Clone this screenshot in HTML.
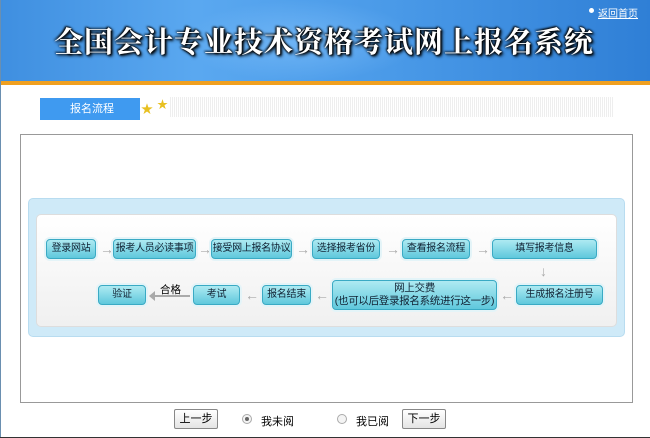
<!DOCTYPE html>
<html><head><meta charset="utf-8"><style>
*{margin:0;padding:0;box-sizing:border-box}
body{width:650px;height:438px;background:#fff;font-family:"Liberation Sans","Noto Sans CJK SC",sans-serif;font-size:11px;position:relative;overflow:hidden;color:#000}
.abs{position:absolute}
#hdr{left:0;top:0;width:650px;height:82px;background:linear-gradient(90deg,#3f8fe0 0%,#5aa8f0 30%,#4a9ae8 60%,#2f7fd6 100%);overflow:hidden}
#hdr .t{left:54px;top:20px;font-size:29px;font-weight:bold;color:#fff;letter-spacing:1px;white-space:nowrap;text-shadow:0 0 2px #000,1px 1px 2px #000,-1px -1px 2px #000,2px 2px 3px #123;font-family:"Noto Serif CJK SC","Noto Sans CJK SC",serif}
#orange{left:0;top:81px;width:650px;height:4px;background:#f0a020}
.box{position:absolute;height:20px;border-radius:4px;background:linear-gradient(#aeeaf2,#5fc8dc);border:1px solid #3aaac4;box-shadow:0 0 0 2px #e4f4f8;text-align:center;line-height:18px;font-size:10px;color:#123;white-space:nowrap;letter-spacing:-0.3px}
.ar{position:absolute;color:#aaa;font-size:14px;font-weight:bold;line-height:14px}
.btn{position:absolute;top:409px;width:44px;height:20px;border:1px solid #888;background:linear-gradient(#fff,#e4e4e4);text-align:center;line-height:18px;font-size:11px;border-radius:2px}
.rd{position:absolute;top:414px;width:10px;height:10px;border-radius:50%;border:1px solid #aaa;background:#f4f4f4}
</style></head><body>
<div id="hdr" class="abs">
<div class="abs" style="left:180px;top:0;width:240px;height:82px;background:radial-gradient(ellipse at center,rgba(140,200,255,.5),rgba(0,0,0,0) 70%)"></div>
<div class="abs t">全国会计专业技术资格考试网上报名系统</div>
<div class="abs" style="left:589px;top:8px;width:5px;height:5px;border-radius:50%;background:#fff"></div>
<div class="abs" style="left:598px;top:5px;color:#fff;font-size:10px;text-decoration:underline">返回首页</div>
</div>
<div id="orange" class="abs"></div>
<div class="abs" style="left:0;top:0;width:1px;height:438px;background:#6a8fb0"></div>
<div class="abs" style="left:40px;top:98px;width:100px;height:22px;background:#3f9af0;color:#fff;font-size:11px;line-height:22px;padding-left:30px">报名流程</div>
<div class="abs" style="left:141px;top:100px;color:#e8c020;font-size:12px">★</div>
<div class="abs" style="left:157px;top:96px;color:#e8c020;font-size:11px">★</div>
<div class="abs" style="left:170px;top:97px;width:443px;height:20px;background:repeating-linear-gradient(90deg,#eee 0 1px,#fff 1px 2px)"></div>
<div class="abs" style="left:20px;top:134px;width:613px;height:269px;border:1px solid #999"></div>
<div class="abs" style="left:28px;top:198px;width:597px;height:139px;background:#cfeaf8;border-radius:5px;border:1px solid #b8dcf0"></div>
<div class="abs" style="left:36px;top:214px;width:581px;height:113px;background:linear-gradient(#fff,#f0f0f0);border-radius:5px;border:1px solid #ddd"></div>
<div class="box" style="left:46px;top:239px;width:50px">登录网站</div>
<span class="ar" style="left:100px;top:242px">→</span>
<div class="box" style="left:113px;top:239px;width:83px">报考人员必读事项</div>
<span class="ar" style="left:198px;top:242px">→</span>
<div class="box" style="left:211px;top:239px;width:81px">接受网上报名协议</div>
<span class="ar" style="left:296px;top:242px">→</span>
<div class="box" style="left:312px;top:239px;width:68px">选择报考省份</div>
<span class="ar" style="left:386px;top:242px">→</span>
<div class="box" style="left:402px;top:239px;width:68px">查看报名流程</div>
<span class="ar" style="left:476px;top:242px">→</span>
<div class="box" style="left:492px;top:239px;width:105px">填写报考信息</div>
<span class="ar" style="left:540px;top:264px">↓</span>
<div class="box" style="left:516px;top:285px;width:87px">生成报名注册号</div>
<span class="ar" style="left:500px;top:288px">←</span>
<div class="box" style="left:332px;top:280px;width:165px;height:30px;line-height:13px;padding-top:1px;font-size:10.5px">网上交费<br>(也可以后登录报名系统进行这一步)</div>
<span class="ar" style="left:315px;top:288px">←</span>
<div class="box" style="left:262px;top:285px;width:49px">报名结束</div>
<span class="ar" style="left:245px;top:288px">←</span>
<div class="box" style="left:193px;top:285px;width:47px">考试</div>
<div class="abs" style="left:152px;top:295px;width:38px;height:2px;background:#aaa"></div>
<span class="abs" style="left:149px;top:291px;width:0;height:0;border-top:5px solid transparent;border-bottom:5px solid transparent;border-right:6px solid #aaa"></span>
<div class="abs" style="left:160px;top:282px;font-size:10.5px">合格</div>
<div class="box" style="left:98px;top:285px;width:48px">验证</div>
<div class="btn" style="left:174px">上一步</div>
<div class="rd" style="left:242px"><div style="width:4px;height:4px;border-radius:50%;background:#666;margin:2px"></div></div>
<div class="abs" style="left:261px;top:413px">我未阅</div>
<div class="rd" style="left:337px"></div>
<div class="abs" style="left:356px;top:413px">我已阅</div>
<div class="btn" style="left:402px">下一步</div>
<div class="abs" style="left:0;top:437px;width:650px;height:1px;background:#333"></div>
</body></html>
